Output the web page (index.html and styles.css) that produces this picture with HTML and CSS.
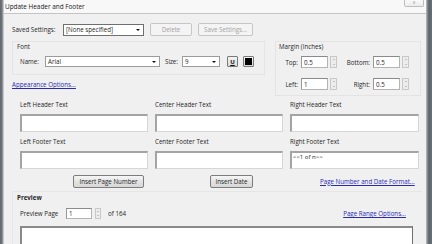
FILE: index.html
```html
<!DOCTYPE html>
<html>
<head>
<meta charset="utf-8">
<link rel="stylesheet" href="styles.css">
</head>
<body>
<div class="window">
  <div class="frame-left"></div>
  <div class="main">
    <div class="titlebar">
      <span class="title">Update Header and Footer</span>
      <span class="close">x</span>
    </div>
    <div class="content">
      <div class="saved-row">
        <span class="label saved-label">Saved Settings:</span>
        <div class="select saved-select"><span class="sel-text">[None specified]</span><span class="arrow"></span></div>
        <div class="btn disabled delete-btn">Delete</div>
        <div class="btn disabled save-btn">Save Settings...</div>
      </div>

      <div class="top-grid">
        <div class="left-col">
          <div class="group font-group">
            <div class="group-title">Font</div>
            <div class="font-row">
              <span class="label name-label">Name:</span>
              <div class="select name-select"><span class="sel-text">Arial</span><span class="arrow"></span></div>
              <span class="label size-label">Size:</span>
              <div class="select size-select"><span class="sel-text">9</span><span class="arrow"></span></div>
              <div class="sq-btn u-btn"><span class="u">U</span></div>
              <div class="sq-btn color-btn"><span class="swatch"></span></div>
            </div>
          </div>
          <a class="link appearance">Appearance Options...</a>
        </div>
        <div class="group margin-group">
          <div class="group-title">Margin (Inches)</div>
          <div class="margin-grid">
            <span class="mlabel">Top:</span>
            <div class="input"><span>0.5</span></div>
            <div class="spin"><span class="up"></span><span class="down"></span></div>
            <span class="mlabel">Bottom:</span>
            <div class="input"><span>0.5</span></div>
            <div class="spin"><span class="up"></span><span class="down"></span></div>
            <span class="mlabel">Left:</span>
            <div class="input"><span>1</span></div>
            <div class="spin"><span class="up"></span><span class="down"></span></div>
            <span class="mlabel">Right:</span>
            <div class="input"><span>0.5</span></div>
            <div class="spin"><span class="up"></span><span class="down"></span></div>
          </div>
        </div>
      </div>

      <div class="hf-grid">
        <div class="hf-cell"><div class="label hf-label">Left Header Text</div><div class="textbox"></div></div>
        <div class="hf-cell"><div class="label hf-label">Center Header Text</div><div class="textbox"></div></div>
        <div class="hf-cell"><div class="label hf-label">Right Header Text</div><div class="textbox"></div></div>
        <div class="hf-cell"><div class="label hf-label foot">Left Footer Text</div><div class="textbox"></div></div>
        <div class="hf-cell"><div class="label hf-label foot">Center Footer Text</div><div class="textbox"></div></div>
        <div class="hf-cell"><div class="label hf-label foot">Right Footer Text</div><div class="textbox"><span class="tb-text">&lt;&lt;1 of n&gt;&gt;</span></div></div>
      </div>

      <div class="btn-grid">
        <div class="bcell"><div class="btn insert-page">Insert Page Number</div></div>
        <div class="bcell"><div class="btn insert-date">Insert Date</div></div>
        <div class="bcell"><a class="link fmt-link">Page Number and Date Format...</a></div>
      </div>

      <div class="preview">
        <div class="preview-title">Preview</div>
        <div class="preview-row">
          <span class="label pp-label">Preview Page</span>
          <div class="input pp-input"><span>1</span></div>
          <div class="spin pp-spin"><span class="up"></span><span class="down"></span></div>
          <span class="label of-label">of 164</span>
          <a class="link range-link">Page Range Options...</a>
        </div>
        <div class="preview-box"></div>
      </div>
    </div>
  </div>
  <div class="frame-right"></div>
</div>
</body>
</html>
```

FILE: styles.css
```css
* { box-sizing: border-box; }
html, body {
  margin: 0;
  padding: 0;
  width: 432px;
  height: 244px;
  overflow: hidden;
  background: #f0f0f0;
}
body {
  font-family: "Open Sans", "Noto Sans", sans-serif;
  font-size: 6.2px;
  color: #262626;
}
.window {
  display: flex;
  width: 432px;
  height: 244px;
  overflow: hidden;
}
.frame-left {
  width: 4px;
  flex: none;
  background: linear-gradient(to right, #62676e 0, #6f747b 2px, #aeb2b8 3px, #d6d8db 4px);
}
.frame-right {
  width: 6px;
  flex: none;
  background: linear-gradient(to right, #c9ccd0 0, #8e949b 1px, #5d636b 3px, #6a7078 6px);
}
.main {
  flex: 1;
  display: flex;
  flex-direction: column;
  background: #f0f0f0;
  min-width: 0;
}
.titlebar {
  height: 14px;
  flex: none;
  display: flex;
  justify-content: space-between;
  align-items: flex-start;
  background: #f8f8f8;
  border-bottom: 1px solid #c4c4c4;
  padding-right: 2px;
}
.title {
  line-height: 13px;
  padding-left: 1px;
  font-size: 6.4px;
  color: #202020;
}
.close {
  width: 20px;
  height: 7px;
  border: 1px solid #bdbdbd;
  border-top: none;
  border-radius: 0 0 2px 2px;
  background: linear-gradient(#fafafa, #ececec);
  color: #8a8a8a;
  font-size: 5px;
  line-height: 5px;
  text-align: center;
}
.content {
  flex: 1;
  padding: 0 4px 0 8px;
  min-height: 0;
}
.label { white-space: nowrap; }

/* saved settings row */
.saved-row {
  display: flex;
  align-items: center;
  margin-top: 9px;
  height: 13px;
}
.saved-label { width: 51px; }
.select {
  display: flex;
  align-items: center;
  justify-content: space-between;
  background: #fff;
  border: 1px solid #9c9c9c;
  height: 12px;
  padding: 0 3px 0 2px;
}
.saved-select { width: 81px; border-color: #6f6f6f; }
.arrow {
  width: 0;
  height: 0;
  border-left: 2px solid transparent;
  border-right: 2px solid transparent;
  border-top: 2px solid #111;
}
.btn {
  height: 13px;
  display: flex;
  align-items: center;
  justify-content: center;
  border: 1px solid #7c7c7c;
  border-radius: 2px;
  background: linear-gradient(#f6f6f6, #e3e3e3 50%, #d8d8d8);
  color: #1f1f1f;
  white-space: nowrap;
}
.btn.disabled {
  border-color: #c6c6c6;
  background: #f4f4f4;
  color: #a3a3a3;
}
.delete-btn { width: 42px; margin-left: 6px; }
.save-btn { width: 55px; margin-left: 6px; }

/* top grid */
.top-grid {
  display: grid;
  grid-template-columns: 253px 146px;
  column-gap: 10px;
  align-items: start;
  margin-top: 5px;
}
.group {
  border: 1px solid #e4e4e4;
}
.group-title {
  height: 8px;
  line-height: 8px;
}
.font-group {
  height: 34px;
  padding: 1px 7px 0 4px;
}
.font-row {
  display: flex;
  align-items: center;
  height: 11px;
  margin-top: 5px;
  padding-left: 3px;
}
.font-row .select { height: 11px; }
.name-label { width: 25px; }
.name-select { width: 115px; }
.size-label { width: 17px; margin-left: 5px; }
.size-select { width: 38px; }
.sq-btn {
  width: 11px;
  height: 11px;
  border: 1px solid #7a7a7a;
  border-radius: 1px;
  background: linear-gradient(#f4f4f4, #d9d9d9);
  display: flex;
  align-items: center;
  justify-content: center;
}
.u-btn { margin-left: 7px; }
.u {
  font-weight: bold;
  text-decoration: underline;
  font-size: 6px;
  line-height: 6px;
  color: #111;
}
.color-btn { margin-left: 5px; width: 11px; }
.swatch {
  width: 7px;
  height: 7px;
  background: #000;
}
.link {
  color: #2a2ab4;
  text-decoration: underline;
  white-space: nowrap;
}
.appearance {
  display: block;
  margin-top: 6px;
  line-height: 8px;
  height: 8px;
}
.margin-group {
  height: 55px;
  padding: 1px 3px 0 3px;
}
.margin-grid {
  display: grid;
  grid-template-columns: 22px 27px 9px 36px 27px 9px;
  grid-auto-rows: 12px;
  row-gap: 10px;
  margin-top: 5px;
  align-items: center;
}
.mlabel {
  text-align: right;
  padding-right: 3px;
}
.input {
  height: 12px;
  background: #fff;
  border: 1px solid #b4b4b4;
  border-top-color: #8a8a8a;
  border-left-color: #999;
  display: flex;
  align-items: center;
  padding-left: 2px;
}
.spin {
  width: 7px;
  height: 12px;
  margin-left: 2px;
  border: 1px solid #c8c8c8;
  background: #ececec;
  display: flex;
  flex-direction: column;
  align-items: center;
  justify-content: space-around;
}
.spin .up, .spin .down {
  width: 0;
  height: 0;
  border-left: 1.5px solid transparent;
  border-right: 1.5px solid transparent;
}
.spin .up { border-bottom: 1.5px solid #9a9a9a; }
.spin .down { border-top: 1.5px solid #9a9a9a; }

/* header footer grid */
.hf-grid {
  display: grid;
  grid-template-columns: 128px 128px 129px;
  column-gap: 7px;
  row-gap: 6px;
  margin: 5px 0 0 8px;
}
.hf-label {
  height: 8px;
  line-height: 8px;
  margin-bottom: 5px;
}
.textbox {
  height: 18px;
  background: #fff;
  border: 1px solid #d6d6d6;
  border-top: 2px solid #a4a4a4;
  border-left: 2px solid #a4a4a4;
  padding: 1px 1px;
}
.tb-text {
  font-size: 6px;
  line-height: 7px;
  display: block;
}

/* button row */
.btn-grid {
  display: grid;
  grid-template-columns: 128px 128px 129px;
  column-gap: 7px;
  margin: 6px 0 0 8px;
  height: 13px;
  align-items: center;
}
.insert-page { width: 71px; margin-left: 53px; }
.insert-date { width: 43px; margin-left: 55px; }
.fmt-link { display: block; margin-left: 30px; line-height: 8px; }

/* preview */
.preview {
  margin-top: 3px;
  border-top: 1px solid #e6e6e6;
  border-left: 1px solid #e6e6e6;
  padding-top: 2px;
}
.preview-title {
  font-weight: bold;
  line-height: 8px;
  height: 8px;
  padding-left: 4px;
}
.preview-row {
  display: flex;
  align-items: center;
  height: 11px;
  margin: 6px 16px 0 7px;
}
.pp-label { width: 46px; }
.pp-input { width: 26px; height: 11px; }
.pp-spin { width: 6px; height: 11px; margin-left: 3px; }
.of-label { margin-left: 7px; }
.range-link { margin-left: auto; }
.preview-box {
  margin: 7px 0 0 7px;
  width: 393px;
  height: 30px;
  background: #fff;
  border: 1px solid #6e6e6e;
  border-top: 2px solid #8a8a8a;
  border-left: 2px solid #8a8a8a;
}
```
